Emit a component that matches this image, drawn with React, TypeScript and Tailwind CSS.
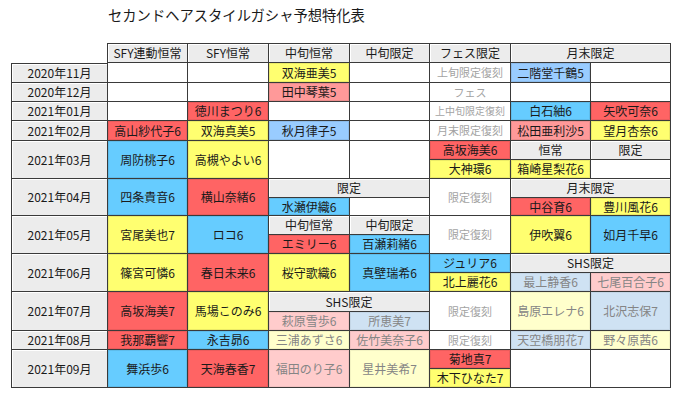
import React from 'react';

type Tone = 'head' | 'date' | 'blank' | 'y' | 'r' | 'b' | 'lb' | 'p' | 'fp' | 'fb' | 'fy' | 'fes' | 'fesSmall';

type Cell = {
  pos: string;
  text?: string;
  tone: Tone;
};

const TONE_CLASS: Record<Tone, string> = {
  head: 'bg-[#ececec] text-[#1a1a1a] shadow-[inset_1px_1px_0_#ffffff]',
  date: 'bg-[#ececec] text-[#1a1a1a] shadow-[inset_1px_1px_0_#ffffff]',
  blank: 'bg-white',
  y: 'bg-[#ffff70] text-[#1a1a1a] shadow-[inset_0_0_0_1px_rgba(0,0,0,0.08)]',
  r: 'bg-[#ff6464] text-[#1a1a1a] shadow-[inset_0_0_0_1px_rgba(0,0,0,0.08)]',
  b: 'bg-[#66ccff] text-[#1a1a1a] shadow-[inset_0_0_0_1px_rgba(0,0,0,0.08)]',
  lb: 'bg-[#99ccff] text-[#1a1a1a] shadow-[inset_0_0_0_1px_rgba(0,0,0,0.08)]',
  p: 'bg-[#ff9999] text-[#1a1a1a] shadow-[inset_0_0_0_1px_rgba(0,0,0,0.08)]',
  fp: 'bg-[#ffcccc] text-[#858585] shadow-[inset_0_0_0_1px_rgba(0,0,0,0.05)]',
  fb: 'bg-[#cfe2f3] text-[#858585] shadow-[inset_0_0_0_1px_rgba(0,0,0,0.05)]',
  fy: 'bg-[#ffffcc] text-[#858585] shadow-[inset_0_0_0_1px_rgba(0,0,0,0.05)]',
  fes: 'bg-white text-[#a3a3a3] text-[11px]',
  fesSmall: 'bg-white text-[#a3a3a3] text-[10px]',
};

// grid: col 1 = month, cols 2-8 = gacha slots; rows 1 = header, 2-18 = half-month rows
const CELLS: Cell[] = [
  { pos: 'col-start-2 row-start-1 border-t border-l', text: 'SFY連動恒常', tone: 'head' },
  { pos: 'col-start-3 row-start-1 border-t', text: 'SFY恒常', tone: 'head' },
  { pos: 'col-start-4 row-start-1 border-t', text: '中旬恒常', tone: 'head' },
  { pos: 'col-start-5 row-start-1 border-t', text: '中旬限定', tone: 'head' },
  { pos: 'col-start-6 row-start-1 border-t', text: 'フェス限定', tone: 'head' },
  { pos: 'col-start-7 col-span-2 row-start-1 border-t', text: '月末限定', tone: 'head' },

  // 2020/11
  { pos: 'col-start-1 row-start-2 border-t', text: '2020年11月', tone: 'date' },
  { pos: 'col-start-2 row-start-2 border-l', tone: 'blank' },
  { pos: 'col-start-3 row-start-2', tone: 'blank' },
  { pos: 'col-start-4 row-start-2', text: '双海亜美5', tone: 'y' },
  { pos: 'col-start-5 row-start-2', tone: 'blank' },
  { pos: 'col-start-6 row-start-2', text: '上旬限定復刻', tone: 'fes' },
  { pos: 'col-start-7 row-start-2', text: '二階堂千鶴5', tone: 'lb' },
  { pos: 'col-start-8 row-start-2', tone: 'blank' },

  // 2020/12
  { pos: 'col-start-1 row-start-3', text: '2020年12月', tone: 'date' },
  { pos: 'col-start-2 row-start-3 border-l', tone: 'blank' },
  { pos: 'col-start-3 row-start-3', tone: 'blank' },
  { pos: 'col-start-4 row-start-3', text: '田中琴葉5', tone: 'p' },
  { pos: 'col-start-5 row-start-3', tone: 'blank' },
  { pos: 'col-start-6 row-start-3', text: 'フェス', tone: 'fes' },
  { pos: 'col-start-7 row-start-3', tone: 'blank' },
  { pos: 'col-start-8 row-start-3', tone: 'blank' },

  // 2021/01
  { pos: 'col-start-1 row-start-4', text: '2021年01月', tone: 'date' },
  { pos: 'col-start-2 row-start-4 border-l', tone: 'blank' },
  { pos: 'col-start-3 row-start-4', text: '徳川まつり6', tone: 'r' },
  { pos: 'col-start-4 row-start-4', tone: 'blank' },
  { pos: 'col-start-5 row-start-4', tone: 'blank' },
  { pos: 'col-start-6 row-start-4', text: '上中旬限定復刻', tone: 'fesSmall' },
  { pos: 'col-start-7 row-start-4', text: '白石紬6', tone: 'b' },
  { pos: 'col-start-8 row-start-4', text: '矢吹可奈6', tone: 'r' },

  // 2021/02
  { pos: 'col-start-1 row-start-5', text: '2021年02月', tone: 'date' },
  { pos: 'col-start-2 row-start-5 border-l', text: '高山紗代子6', tone: 'r' },
  { pos: 'col-start-3 row-start-5', text: '双海真美5', tone: 'y' },
  { pos: 'col-start-4 row-start-5', text: '秋月律子5', tone: 'lb' },
  { pos: 'col-start-5 row-start-5', tone: 'blank' },
  { pos: 'col-start-6 row-start-5', text: '月末限定復刻', tone: 'fes' },
  { pos: 'col-start-7 row-start-5', text: '松田亜利沙5', tone: 'p' },
  { pos: 'col-start-8 row-start-5', text: '望月杏奈6', tone: 'y' },

  // 2021/03
  { pos: 'col-start-1 row-start-6 row-span-2', text: '2021年03月', tone: 'date' },
  { pos: 'col-start-2 row-start-6 row-span-2 border-l', text: '周防桃子6', tone: 'b' },
  { pos: 'col-start-3 row-start-6 row-span-2', text: '高槻やよい6', tone: 'y' },
  { pos: 'col-start-4 row-start-6 row-span-2', tone: 'blank' },
  { pos: 'col-start-5 row-start-6 row-span-2', tone: 'blank' },
  { pos: 'col-start-6 row-start-6', text: '高坂海美6', tone: 'r' },
  { pos: 'col-start-6 row-start-7', text: '大神環6', tone: 'y' },
  { pos: 'col-start-7 row-start-6', text: '恒常', tone: 'head' },
  { pos: 'col-start-7 row-start-7', text: '箱崎星梨花6', tone: 'y' },
  { pos: 'col-start-8 row-start-6', text: '限定', tone: 'head' },
  { pos: 'col-start-8 row-start-7', tone: 'blank' },

  // 2021/04
  { pos: 'col-start-1 row-start-8 row-span-2', text: '2021年04月', tone: 'date' },
  { pos: 'col-start-2 row-start-8 row-span-2 border-l', text: '四条貴音6', tone: 'b' },
  { pos: 'col-start-3 row-start-8 row-span-2', text: '横山奈緒6', tone: 'r' },
  { pos: 'col-start-4 col-span-2 row-start-8', text: '限定', tone: 'head' },
  { pos: 'col-start-4 row-start-9', text: '水瀬伊織6', tone: 'b' },
  { pos: 'col-start-5 row-start-9', tone: 'blank' },
  { pos: 'col-start-6 row-start-8 row-span-2', text: '限定復刻', tone: 'fes' },
  { pos: 'col-start-7 col-span-2 row-start-8', text: '月末限定', tone: 'head' },
  { pos: 'col-start-7 row-start-9', text: '中谷育6', tone: 'r' },
  { pos: 'col-start-8 row-start-9', text: '豊川風花6', tone: 'y' },

  // 2021/05
  { pos: 'col-start-1 row-start-10 row-span-2', text: '2021年05月', tone: 'date' },
  { pos: 'col-start-2 row-start-10 row-span-2 border-l', text: '宮尾美也7', tone: 'y' },
  { pos: 'col-start-3 row-start-10 row-span-2', text: 'ロコ6', tone: 'b' },
  { pos: 'col-start-4 row-start-10', text: '中旬恒常', tone: 'head' },
  { pos: 'col-start-4 row-start-11', text: 'エミリー6', tone: 'r' },
  { pos: 'col-start-5 row-start-10', text: '中旬限定', tone: 'head' },
  { pos: 'col-start-5 row-start-11', text: '百瀬莉緒6', tone: 'b' },
  { pos: 'col-start-6 row-start-10 row-span-2', text: '限定復刻', tone: 'fes' },
  { pos: 'col-start-7 row-start-10 row-span-2', text: '伊吹翼6', tone: 'y' },
  { pos: 'col-start-8 row-start-10 row-span-2', text: '如月千早6', tone: 'b' },

  // 2021/06
  { pos: 'col-start-1 row-start-12 row-span-2', text: '2021年06月', tone: 'date' },
  { pos: 'col-start-2 row-start-12 row-span-2 border-l', text: '篠宮可憐6', tone: 'y' },
  { pos: 'col-start-3 row-start-12 row-span-2', text: '春日未来6', tone: 'r' },
  { pos: 'col-start-4 row-start-12 row-span-2', text: '桜守歌織6', tone: 'y' },
  { pos: 'col-start-5 row-start-12 row-span-2', text: '真壁瑞希6', tone: 'b' },
  { pos: 'col-start-6 row-start-12', text: 'ジュリア6', tone: 'b' },
  { pos: 'col-start-6 row-start-13', text: '北上麗花6', tone: 'y' },
  { pos: 'col-start-7 col-span-2 row-start-12', text: 'SHS限定', tone: 'head' },
  { pos: 'col-start-7 row-start-13', text: '最上静香6', tone: 'fb' },
  { pos: 'col-start-8 row-start-13', text: '七尾百合子6', tone: 'fp' },

  // 2021/07
  { pos: 'col-start-1 row-start-14 row-span-2', text: '2021年07月', tone: 'date' },
  { pos: 'col-start-2 row-start-14 row-span-2 border-l', text: '高坂海美7', tone: 'r' },
  { pos: 'col-start-3 row-start-14 row-span-2', text: '馬場このみ6', tone: 'y' },
  { pos: 'col-start-4 col-span-2 row-start-14', text: 'SHS限定', tone: 'head' },
  { pos: 'col-start-4 row-start-15', text: '萩原雪歩6', tone: 'fp' },
  { pos: 'col-start-5 row-start-15', text: '所恵美7', tone: 'fb' },
  { pos: 'col-start-6 row-start-14 row-span-2', text: '限定復刻', tone: 'fes' },
  { pos: 'col-start-7 row-start-14 row-span-2', text: '島原エレナ6', tone: 'fy' },
  { pos: 'col-start-8 row-start-14 row-span-2', text: '北沢志保7', tone: 'fb' },

  // 2021/08
  { pos: 'col-start-1 row-start-16', text: '2021年08月', tone: 'date' },
  { pos: 'col-start-2 row-start-16 border-l', text: '我那覇響7', tone: 'r' },
  { pos: 'col-start-3 row-start-16', text: '永吉昴6', tone: 'b' },
  { pos: 'col-start-4 row-start-16', text: '三浦あずさ6', tone: 'fy' },
  { pos: 'col-start-5 row-start-16', text: '佐竹美奈子6', tone: 'fp' },
  { pos: 'col-start-6 row-start-16', text: '限定復刻', tone: 'fes' },
  { pos: 'col-start-7 row-start-16', text: '天空橋朋花7', tone: 'fb' },
  { pos: 'col-start-8 row-start-16', text: '野々原茜6', tone: 'fy' },

  // 2021/09
  { pos: 'col-start-1 row-start-17 row-span-2', text: '2021年09月', tone: 'date' },
  { pos: 'col-start-2 row-start-17 row-span-2 border-l', text: '舞浜歩6', tone: 'b' },
  { pos: 'col-start-3 row-start-17 row-span-2', text: '天海春香7', tone: 'r' },
  { pos: 'col-start-4 row-start-17 row-span-2', text: '福田のり子6', tone: 'fp' },
  { pos: 'col-start-5 row-start-17 row-span-2', text: '星井美希7', tone: 'fy' },
  { pos: 'col-start-6 row-start-17', text: '菊地真7', tone: 'r' },
  { pos: 'col-start-6 row-start-18', text: '木下ひなた7', tone: 'y' },
  { pos: 'col-start-7 row-start-17 row-span-2', tone: 'blank' },
  { pos: 'col-start-8 row-start-17 row-span-2', tone: 'blank' },
];

function GridCell({ cell }: { cell: Cell }): React.JSX.Element {
  const edges = cell.tone === 'date' ? 'border-l border-b' : 'border-r border-b';
  return (
    <div
      className={`${cell.pos} ${edges} ${TONE_CLASS[cell.tone]} border-[#3a3a3a] flex items-center justify-center whitespace-nowrap leading-none`}
    >
      {cell.text}
    </div>
  );
}

export default function App(): React.JSX.Element {
  return (
    <div className="w-[680px] h-[400px] bg-white overflow-hidden font-['Noto_Sans_CJK_JP','Noto_Sans',sans-serif] text-[12px]">
      <h1 className="pl-[108px] pt-[5px] text-[14.3px] leading-[20px] font-normal text-[#1a1a1a]">
        セカンドヘアスタイルガシャ予想特化表
      </h1>
      <div className="ml-[11px] mt-[18px] grid grid-cols-[96px_81px_81px_81px_80px_81px_80px_80px] grid-rows-[20px_20px_19px_19px_20px_19px_19px_19px_18px_19px_19px_19px_19px_20px_19px_19px_19px_19px] w-max">
        {CELLS.map((cell) => (
          <GridCell key={cell.pos} cell={cell} />
        ))}
      </div>
    </div>
  );
}
